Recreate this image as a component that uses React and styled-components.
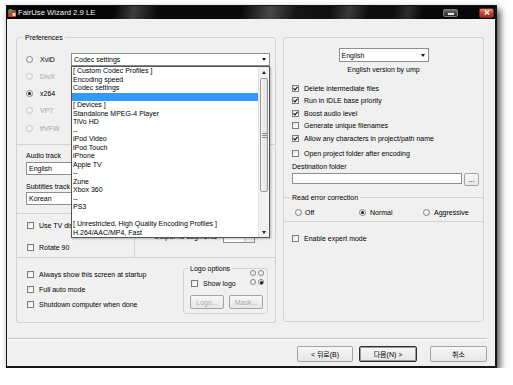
import React from 'react';
import styled, { createGlobalStyle } from 'styled-components';

const GlobalStyle = createGlobalStyle`
  html, body { margin: 0; padding: 0; background: #ffffff; }
  body {
    font-family: "Liberation Sans", "Noto Sans CJK KR", sans-serif;
    font-size: 7px;
    color: #000;
  }
  * { box-sizing: border-box; }
`;

const LINE = '#d3d3d3';

const Window = styled.div`
  width: 491px;
  height: 363px;
  margin: 5px 0 0 6px;
  display: flex;
  flex-direction: column;
  background: #f0f0f0;
  border: 1px solid #161616;
  border-right-width: 2px;
  border-bottom-width: 2px;
  box-shadow: 3px 4px 7px rgba(0, 0, 0, 0.7);
`;

const TitleBar = styled.div`
  flex: none;
  height: 13px;
  display: flex;
  align-items: center;
  padding: 0 1px;
  color: #f2f2f2;
  font-size: 7.7px;
  background: linear-gradient(
    100deg,
    #060606 0%, #060606 22%,
    #3c3c3c 26%, #0a0a0a 31%,
    #0a0a0a 48%, #484848 54%, #151515 59%,
    #101010 66%, #3a3a3a 70%, #0e0e0e 74%,
    #0e0e0e 79%, #2c2c2c 82%, #080808 85%, #080808 100%
  );
`;

const TitleText = styled.span`
  margin-left: 2px;
  line-height: 13px;
`;

const MinButton = styled.div`
  margin-left: auto;
  width: 15px;
  height: 8px;
  border: 1px solid #7a7a7a;
  border-radius: 2px;
  background: linear-gradient(#6a6a6a, #2a2a2a);
  display: flex;
  align-items: flex-end;
  justify-content: center;
  padding-bottom: 1px;
  &::after {
    content: '';
    width: 6px;
    height: 2px;
    background: #e8e8e8;
  }
`;

const CloseButton = styled.div`
  margin-left: 21px;
  width: 15px;
  height: 10px;
  border: 1px solid #6a2a20;
  border-radius: 2px;
  background: linear-gradient(#e89080, #c2402c 55%, #a8301c);
  display: flex;
  align-items: center;
  justify-content: center;
`;

const Body = styled.div`
  flex: 1;
  display: flex;
  flex-direction: column;
  padding-top: 18px;
`;

const Columns = styled.div`
  display: grid;
  grid-template-columns: 260px 201px;
  column-gap: 7px;
  padding-left: 9px;
`;

const Column = styled.div`
  display: flex;
  flex-direction: column;
`;

const Caption = styled.span`
  position: absolute;
  top: -5px;
  left: ${(p) => p.$left || 6}px;
  padding: 0 2px;
  line-height: 9px;
  background: #f0f0f0;
  white-space: nowrap;
`;

const PrefBox = styled.div`
  position: relative;
  height: 221px;
  display: flex;
  flex-direction: column;
  border: 1px solid ${LINE};
  border-radius: 3px 3px 0 0;
`;

const TopSection = styled.div`
  flex: none;
  height: 107px;
  display: flex;
  padding-left: 9px;
  border-bottom: 1px solid ${LINE};
`;

const RadioColumn = styled.div`
  width: 45px;
  padding-top: 12.5px;
  display: flex;
  flex-direction: column;
`;

const ComboWrap = styled.div`
  position: relative;
  margin-top: 15px;
  width: 199px;
  z-index: 5;
`;

const Combo = styled.div`
  width: ${(p) => p.$w}px;
  height: ${(p) => p.$h || 13}px;
  flex: none;
  display: flex;
  align-items: center;
  padding-left: 2px;
  background: #fff;
  border: 1px solid #8a8f96;
  white-space: nowrap;
  overflow: hidden;
`;

const ComboText = styled.span`
  flex: 1;
  line-height: 9px;
`;

const DropArrow = styled.span`
  flex: none;
  width: 10px;
  align-self: stretch;
  display: flex;
  align-items: center;
  justify-content: center;
  &::after {
    content: '';
    border-left: 2.5px solid transparent;
    border-right: 2.5px solid transparent;
    border-top: 3px solid #111;
  }
`;

const DropList = styled.div`
  position: absolute;
  top: 13px;
  left: 0;
  width: 199px;
  height: 172px;
  display: flex;
  background: #fff;
  border: 1px solid #555;
  box-shadow: 1px 1px 2px rgba(0, 0, 0, 0.25);
`;

const ListItems = styled.div`
  flex: 1;
  display: flex;
  flex-direction: column;
  overflow: hidden;
`;

const ListItem = styled.div`
  height: 8.5px;
  flex: none;
  line-height: 8.5px;
  padding-left: 1px;
  white-space: nowrap;
  background: ${(p) => (p.$selected ? '#3399ff' : 'transparent')};
  color: ${(p) => (p.$selected ? '#fff' : '#000')};
`;

const ScrollBar = styled.div`
  width: 11px;
  flex: none;
  display: flex;
  flex-direction: column;
  background: #f1f1f1;
  border-left: 1px solid #e4e4e4;
`;

const ScrollArrow = styled.div`
  height: 10px;
  flex: none;
  display: flex;
  align-items: center;
  justify-content: center;
  &::after {
    content: '';
    border-left: 2.5px solid transparent;
    border-right: 2.5px solid transparent;
    ${(p) => (p.$up ? 'border-bottom: 3px solid #222;' : 'border-top: 3px solid #222;')}
  }
`;

const Thumb = styled.div`
  height: 114px;
  margin: 1px 1px 0 1px;
  border: 1px solid #9a9a9a;
  border-radius: 2px;
  background: linear-gradient(90deg, #f7f7f7, #dedede);
  display: flex;
  align-items: center;
  justify-content: center;
`;

const Grip = styled.div`
  width: 5px;
  height: 5px;
  border-top: 1px solid #8a8a8a;
  border-bottom: 1px solid #8a8a8a;
  position: relative;
  &::after {
    content: '';
    position: absolute;
    left: 0;
    right: 0;
    top: 1px;
    border-top: 1px solid #8a8a8a;
  }
`;

const TrackFill = styled.div`
  flex: 1;
`;

const MiddleSection = styled.div`
  flex: 1;
  display: flex;
`;

const LeftPart = styled.div`
  width: 118px;
  display: flex;
  flex-direction: column;
  border-right: 1px solid ${LINE};
`;

const TrackArea = styled.div`
  height: 69px;
  flex: none;
  display: flex;
  flex-direction: column;
  padding: 5.5px 0 0 9px;
  border-bottom: 1px solid ${LINE};
`;

const FieldLabel = styled.div`
  line-height: 9px;
  margin-top: ${(p) => p.$mt || 0}px;
  padding-left: ${(p) => p.$pl || 0}px;
  white-space: nowrap;
`;

const CheckArea = styled.div`
  display: flex;
  flex-direction: column;
  gap: 11px;
  padding: 5.5px 0 0 10px;
`;

const RightPart = styled.div`
  flex: 1;
  display: flex;
  align-items: flex-end;
  justify-content: flex-end;
  padding: 0 20px 14px 0;
`;

const SpinRow = styled.div`
  display: flex;
  align-items: center;
  gap: 6px;
  white-space: nowrap;
`;

const Spinner = styled.div`
  width: 32px;
  height: 13px;
  display: flex;
  justify-content: flex-end;
  background: #fff;
  border: 1px solid #8a8f96;
`;

const SpinButton = styled.div`
  width: 10px;
  display: flex;
  flex-direction: column;
  background: #ececec;
  border-left: 1px solid #c8c8c8;
`;

const BottomBox = styled.div`
  position: relative;
  height: 65px;
  display: flex;
  padding-left: 10px;
  border: 1px solid ${LINE};
  border-top: none;
  border-radius: 0 0 3px 3px;
`;

const ChecksColumn = styled.div`
  width: 156px;
  padding-top: 8.5px;
  display: flex;
  flex-direction: column;
`;

const LogoGroup = styled.div`
  position: relative;
  width: 85px;
  height: 46px;
  margin-top: 10px;
  padding-top: 1px;
  border: 1px solid ${LINE};
  border-radius: 3px;
`;

const LogoTop = styled.div`
  height: 18px;
  display: flex;
  justify-content: space-between;
  align-items: flex-start;
  padding: 0 3px 0 7px;
`;

const RadioGrid = styled.div`
  display: grid;
  grid-template-columns: 6px 6px;
  column-gap: 2px;
  row-gap: 3px;
`;

const ButtonRow = styled.div`
  display: flex;
  gap: ${(p) => p.$gap || 5}px;
  padding-left: ${(p) => p.$pl || 0}px;
  margin-top: ${(p) => p.$mt || 0}px;
  justify-content: ${(p) => p.$justify || 'flex-start'};
  padding-right: ${(p) => p.$pr || 0}px;
`;

const PushButton = styled.div`
  width: ${(p) => p.$w}px;
  height: ${(p) => p.$h || 16}px;
  margin-left: ${(p) => p.$ml || 0}px;
  display: flex;
  align-items: center;
  justify-content: center;
  white-space: nowrap;
  border: 1px solid ${(p) => (p.$default ? '#2e2e2e' : '#a4a4a4')};
  border-radius: 2px;
  color: ${(p) => (p.$disabled ? '#a8a8a8' : '#000')};
  background: linear-gradient(#f7f7f7, #e6e6e6);
  box-shadow: ${(p) => (p.$default ? 'inset 0 0 0 1px #9a9a9a' : 'none')};
`;

const RightTop = styled.div`
  height: 160px;
  display: flex;
  flex-direction: column;
  padding-top: 10px;
  border: 1px solid ${LINE};
  border-bottom: none;
  border-radius: 3px 3px 0 0;
`;

const VersionText = styled.div`
  margin-top: 2.5px;
  line-height: 9px;
  text-align: center;
`;

const CheckList = styled.div`
  display: flex;
  flex-direction: column;
  padding-left: 8px;
  margin-top: ${(p) => p.$mt || 0}px;
`;

const PathRow = styled.div`
  display: flex;
  align-items: flex-start;
  gap: 2px;
  margin-top: 2.5px;
  padding-left: 8px;
`;

const PathInput = styled.div`
  width: 170px;
  height: 11px;
  background: #fff;
  border: 1px solid #8a8f96;
`;

const ErrorSection = styled.div`
  position: relative;
  height: 24px;
  display: grid;
  grid-template-columns: 64px 64px auto;
  align-content: start;
  padding: 9.5px 0 0 11px;
  border: 1px solid ${LINE};
  border-bottom: none;
`;

const ExpertSection = styled.div`
  height: 101px;
  padding: 11.5px 0 0 8px;
  border: 1px solid ${LINE};
  border-radius: 0 0 3px 3px;
`;

const Separator = styled.div`
  height: 2px;
  margin: 15px 8px 0 1px;
  border-top: 1px solid #c6c6c6;
  border-bottom: 1px solid #fdfdfd;
`;

const OptionRow = styled.div`
  display: flex;
  align-items: center;
  height: ${(p) => p.$h || 9}px;
  flex: none;
  gap: ${(p) => p.$gap ?? 5}px;
  margin-top: ${(p) => p.$mt || 0}px;
  white-space: nowrap;
  color: ${(p) => (p.$disabled ? '#a6a6a6' : '#000')};
`;

const Box = styled.span`
  flex: none;
  width: 7px;
  height: 7px;
  display: flex;
  align-items: center;
  justify-content: center;
  border: 1px solid ${(p) => (p.$disabled ? '#c4c4c4' : '#7c7c7c')};
  background: linear-gradient(135deg, #e2e2e2, #ffffff 70%);
`;

const Dot = styled.span`
  flex: none;
  width: ${(p) => p.$size || 7}px;
  height: ${(p) => p.$size || 7}px;
  border-radius: 50%;
  display: flex;
  align-items: center;
  justify-content: center;
  border: 1px solid ${(p) => (p.$disabled ? '#c6c6c6' : '#858585')};
  background: radial-gradient(circle at 40% 35%, #ffffff, #e2e2e2);
  &::after {
    content: '';
    width: 3px;
    height: 3px;
    border-radius: 50%;
    background: ${(p) => (p.$checked ? '#1c1c1c' : 'transparent')};
  }
`;

const CheckMark = () => (
  <svg width="5" height="5" viewBox="0 0 5 5">
    <path d="M0.5 2.3 L2 3.9 L4.6 0.8" fill="none" stroke="#111" strokeWidth="1.2" />
  </svg>
);

const Check = ({ label, checked, disabled, h, mt }) => (
  <OptionRow $h={h} $mt={mt} $disabled={disabled}>
    <Box $disabled={disabled}>{checked && <CheckMark />}</Box>
    {label}
  </OptionRow>
);

const Radio = ({ label, checked, disabled, h, gap }) => (
  <OptionRow $h={h} $gap={gap} $disabled={disabled}>
    <Dot $checked={checked} $disabled={disabled} />
    {label}
  </OptionRow>
);

const AppIcon = () => (
  <svg width="8" height="8" viewBox="0 0 8 8">
    <rect x="0" y="1" width="8" height="7" rx="1" fill="#c43a32" />
    <rect x="0.5" y="0" width="4" height="4" rx="1" fill="#3f9a48" />
    <rect x="4.5" y="4" width="3" height="3" fill="#e8d8c0" />
  </svg>
);

const CloseGlyph = () => (
  <svg width="6" height="5" viewBox="0 0 6 5">
    <path d="M0.8 0.5 L5.2 4.5 M5.2 0.5 L0.8 4.5" stroke="#fff" strokeWidth="1.3" />
  </svg>
);

const codecItems = [
  '[ Custom Codec Profiles ]',
  'Encoding speed',
  'Codec settings',
  '',
  '[ Devices ]',
  'Standalone MPEG-4 Player',
  'TiVo HD',
  '--',
  'iPod Video',
  'iPod Touch',
  'iPhone',
  'Apple TV',
  '--',
  'Zune',
  'Xbox 360',
  '--',
  'PS3',
  '',
  '[ Unrestricted, High Quality Encoding Profiles ]',
  'H.264/AAC/MP4, Fast',
];

const codecs = [
  { label: 'XviD' },
  { label: 'DivX', disabled: true },
  { label: 'x264', checked: true },
  { label: 'VP7', disabled: true },
  { label: 'tfVFW', disabled: true },
];

const options = [
  { label: 'Delete intermediate files', checked: true },
  { label: 'Run in IDLE base priority', checked: true },
  { label: 'Boost audio level', checked: true },
  { label: 'Generate unique filenames' },
  { label: 'Allow any characters in project/path name', checked: true },
];

const App = () => (
  <>
    <GlobalStyle />
    <Window>
      <TitleBar>
        <AppIcon />
        <TitleText>FairUse Wizard 2.9 LE</TitleText>
        <MinButton />
        <CloseButton>
          <CloseGlyph />
        </CloseButton>
      </TitleBar>

      <Body>
        <Columns>
          <Column>
            <PrefBox>
              <Caption>Preferences</Caption>
              <TopSection>
                <RadioColumn>
                  {codecs.map((c) => (
                    <Radio key={c.label} h={17.25} gap={7} {...c} />
                  ))}
                </RadioColumn>
                <ComboWrap>
                  <Combo $w={199}>
                    <ComboText>Codec settings</ComboText>
                    <DropArrow />
                  </Combo>
                  <DropList>
                    <ListItems>
                      {codecItems.map((item, i) => (
                        <ListItem key={i} $selected={i === 3}>
                          {item}
                        </ListItem>
                      ))}
                    </ListItems>
                    <ScrollBar>
                      <ScrollArrow $up />
                      <Thumb>
                        <Grip />
                      </Thumb>
                      <TrackFill />
                      <ScrollArrow />
                    </ScrollBar>
                  </DropList>
                </ComboWrap>
              </TopSection>

              <MiddleSection>
                <LeftPart>
                  <TrackArea>
                    <FieldLabel>Audio track</FieldLabel>
                    <Combo $w={100} style={{ marginTop: 2.5 }}>
                      <ComboText>English</ComboText>
                      <DropArrow />
                    </Combo>
                    <FieldLabel $mt={6.5}>Subtitles track</FieldLabel>
                    <Combo $w={100} style={{ marginTop: 1.5 }}>
                      <ComboText>Korean</ComboText>
                      <DropArrow />
                    </Combo>
                  </TrackArea>
                  <CheckArea>
                    <Check label="Use TV display" h={11} />
                    <Check label="Rotate 90" h={11} />
                  </CheckArea>
                </LeftPart>
                <RightPart>
                  <SpinRow>
                    Output no segments
                    <Spinner>
                      <SpinButton />
                    </Spinner>
                  </SpinRow>
                </RightPart>
              </MiddleSection>
            </PrefBox>

            <BottomBox>
              <ChecksColumn>
                <Check label="Always show this screen at startup" h={15} />
                <Check label="Full auto mode" h={15} />
                <Check label="Shutdown computer when done" h={15} />
              </ChecksColumn>
              <LogoGroup>
                <Caption $left={4}>Logo options</Caption>
                <LogoTop>
                  <Check label="Show logo" mt={8.5} />
                  <RadioGrid>
                    <Dot $size={6} />
                    <Dot $size={6} />
                    <Dot $size={6} />
                    <Dot $size={6} $checked />
                  </RadioGrid>
                </LogoTop>
                <ButtonRow $pl={6} $mt={7}>
                  <PushButton $w={34} $h={14} $disabled>
                    Logo...
                  </PushButton>
                  <PushButton $w={34} $h={14} $disabled>
                    Mask...
                  </PushButton>
                </ButtonRow>
              </LogoGroup>
            </BottomBox>
          </Column>

          <Column>
            <RightTop>
              <Combo $w={90} $h={14} style={{ alignSelf: 'center' }}>
                <ComboText>English</ComboText>
                <DropArrow />
              </Combo>
              <VersionText>English version by ump</VersionText>
              <CheckList $mt={8.25}>
                {options.map((o) => (
                  <Check key={o.label} h={12.5} {...o} />
                ))}
                <Check label="Open project folder after encoding" h={12.5} mt={2.5} />
              </CheckList>
              <FieldLabel $mt={2.25} $pl={8}>
                Destination folder
              </FieldLabel>
              <PathRow>
                <PathInput />
                <PushButton $w={15} $h={13}>
                  ...
                </PushButton>
              </PathRow>
            </RightTop>

            <ErrorSection>
              <Caption $left={6}>Read error correction</Caption>
              <Radio label="Off" gap={3} />
              <Radio label="Normal" checked gap={4} />
              <Radio label="Aggressive" gap={4} />
            </ErrorSection>

            <ExpertSection>
              <Check label="Enable expert mode" />
            </ExpertSection>
          </Column>
        </Columns>

        <Separator />
        <ButtonRow $justify="flex-end" $pr={8} $mt={6} $gap={0}>
          <PushButton $w={56}>&lt; 뒤로(B)</PushButton>
          <PushButton $w={58} $ml={1} $default>
            다음(N) &gt;
          </PushButton>
          <PushButton $w={57} $ml={8}>
            취소
          </PushButton>
        </ButtonRow>
      </Body>
    </Window>
  </>
);

export default App;
